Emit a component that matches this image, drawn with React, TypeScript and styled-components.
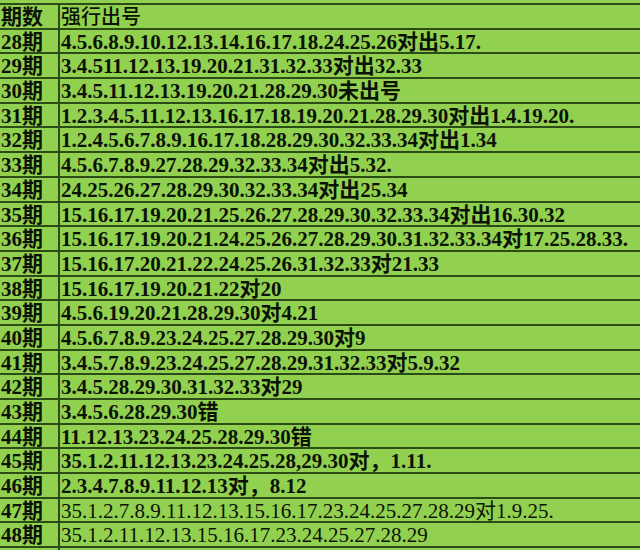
import React from 'react'
import styled, { createGlobalStyle } from 'styled-components'

const GlobalStyle = createGlobalStyle`
    html, body {
        margin: 0;
        padding: 0;
        background: #92d050;
    }
`

type Row = { period: string; numbers: string; plain?: boolean }

const rows: Row[] = [
    { period: '28期', numbers: '4.5.6.8.9.10.12.13.14.16.17.18.24.25.26对出5.17.' },
    { period: '29期', numbers: '3.4.511.12.13.19.20.21.31.32.33对出32.33' },
    { period: '30期', numbers: '3.4.5.11.12.13.19.20.21.28.29.30未出号' },
    { period: '31期', numbers: '1.2.3.4.5.11.12.13.16.17.18.19.20.21.28.29.30对出1.4.19.20.' },
    { period: '32期', numbers: '1.2.4.5.6.7.8.9.16.17.18.28.29.30.32.33.34对出1.34' },
    { period: '33期', numbers: '4.5.6.7.8.9.27.28.29.32.33.34对出5.32.' },
    { period: '34期', numbers: '24.25.26.27.28.29.30.32.33.34对出25.34' },
    { period: '35期', numbers: '15.16.17.19.20.21.25.26.27.28.29.30.32.33.34对出16.30.32' },
    { period: '36期', numbers: '15.16.17.19.20.21.24.25.26.27.28.29.30.31.32.33.34对17.25.28.33.' },
    { period: '37期', numbers: '15.16.17.20.21.22.24.25.26.31.32.33对21.33' },
    { period: '38期', numbers: '15.16.17.19.20.21.22对20' },
    { period: '39期', numbers: '4.5.6.19.20.21.28.29.30对4.21' },
    { period: '40期', numbers: '4.5.6.7.8.9.23.24.25.27.28.29.30对9' },
    { period: '41期', numbers: '3.4.5.7.8.9.23.24.25.27.28.29.31.32.33对5.9.32' },
    { period: '42期', numbers: '3.4.5.28.29.30.31.32.33对29' },
    { period: '43期', numbers: '3.4.5.6.28.29.30错' },
    { period: '44期', numbers: '11.12.13.23.24.25.28.29.30错' },
    { period: '45期', numbers: '35.1.2.11.12.13.23.24.25.28,29.30对，1.11.' },
    { period: '46期', numbers: '2.3.4.7.8.9.11.12.13对，8.12' },
    { period: '47期', numbers: '35.1.2.7.8.9.11.12.13.15.16.17.23.24.25.27.28.29对1.9.25.', plain: true },
    { period: '48期', numbers: '35.1.2.11.12.13.15.16.17.23.24.25.27.28.29', plain: true },
]

const Sheet = styled.div`
    background: #92d050;
    padding-top: 3px;
    height: 550px;
    box-sizing: border-box;
    overflow: hidden;
    font-family: "Liberation Serif", "Noto Sans CJK SC", serif;
    color: #0b1306;
`
const Line = styled.div`
    display: grid;
    grid-template-columns: 60px 1fr;
    height: 24.7px;
    box-sizing: border-box;
    border-top: 2px solid #2c4c17;
`
const Period = styled.div`
    border-right: 2px solid #2c4c17;
    padding-left: 1px;
    font-size: 21px;
    font-weight: bold;
    line-height: 24px;
    white-space: nowrap;
    overflow: hidden;
`
const Numbers = styled.div<{ $plain?: boolean; $head?: boolean }>`
    padding-left: 1px;
    font-size: ${p => (p.$head ? '20px' : '21px')};
    font-weight: ${p => (p.$head ? 500 : p.$plain ? 'normal' : 'bold')};
    line-height: 24px;
    white-space: nowrap;
    overflow: hidden;
`

const App = () => {
    return (
        <>
            <GlobalStyle />
            <Sheet>
                <Line>
                    <Period>期数</Period>
                    <Numbers $head>强行出号</Numbers>
                </Line>
                {rows.map(r => (
                    <Line key={r.period}>
                        <Period>{r.period}</Period>
                        <Numbers $plain={r.plain}>{r.numbers}</Numbers>
                    </Line>
                ))}
                <Line>
                    <Period />
                    <Numbers />
                </Line>
            </Sheet>
        </>
    )
}
export default App
